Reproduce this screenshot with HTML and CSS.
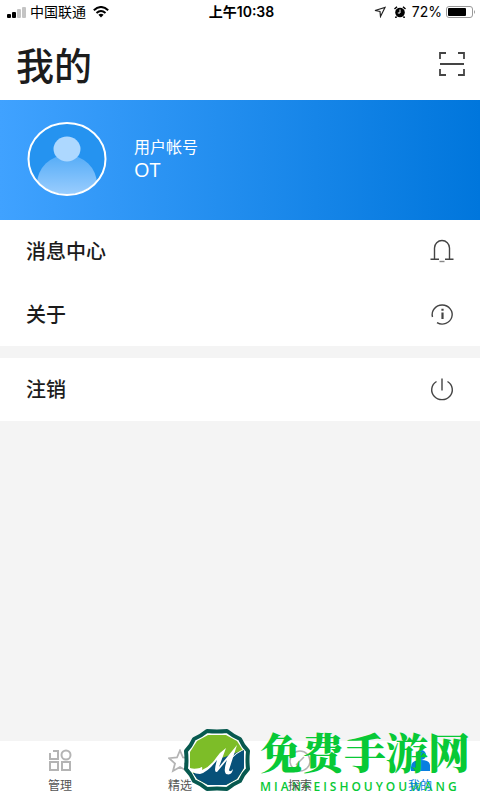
FILE: index.html
```html
<!DOCTYPE html>
<html lang="zh-CN">
<head>
<meta charset="utf-8">
<meta name="viewport" content="width=device-width, initial-scale=1">
<title>我的</title>
<link rel="stylesheet" href="styles.css">
</head>
<body>
<div class="status">
  <div class="status-side">
    <svg class="signal" width="20" height="12" viewBox="0 0 20 12"><rect x="0" y="8" width="4" height="4" rx="1"/><rect x="5" y="6" width="4" height="6" rx="1"/><rect x="10" y="3" width="4" height="9" rx="1" fill="#c4c4c4"/><rect x="15" y="1" width="4" height="11" rx="1" fill="#c4c4c4"/></svg>
    <span>中国联通</span>
    <svg class="wifi" width="16" height="12" viewBox="0 0 16 12" fill="none" stroke="#000" stroke-width="2"><path d="M.8 4.2Q8-2.2 15.2 4.2M3.5 7Q8 3 12.500 7"/><path d="M5.400 8.800Q8 6.800 10.600 8.800L8 11.500Z" fill="#000" stroke="none"/></svg>
  </div>
  <strong class="clock">上午10:38</strong>
  <div class="status-side status-right">
    <svg width="12" height="12" viewBox="0 0 12 12" fill="none" stroke="#222" stroke-width="1.200"><path d="M1 4.500 11 1.500 6.500 10.500 6 5.500Z"/></svg>
    <svg class="alarm" width="12" height="12" viewBox="0 0 12 12"><circle cx="6" cy="6.500" r="4.800"/><path d="M.5 3 3 .8M11.500 3 9 .8M2.500 10.500 1.500 12M9.500 10.500 10.500 12" stroke="#000" stroke-width="1.500"/><path d="M6 3.500V7H3.800" fill="none" stroke="#fff"/></svg>
    <span>72%</span>
    <svg class="battery" width="30" height="12" viewBox="0 0 30 12"><rect x=".5" y=".5" width="26" height="11" rx="2.500" fill="#fff" stroke="#999"/><rect x="2" y="2" width="18" height="8" rx="1"/><path d="M28 4q2 2 0 4z" fill="#999"/></svg>
  </div>
</div>
<header class="header">
  <h1>我的</h1>
  <button class="scan" aria-label="扫一扫"><svg width="26" height="24" viewBox="0 0 26 24" fill="none" stroke="#444" stroke-width="1.800"><path d="M1 7V1h6M19 1h6v6M1 17v6h6M19 23h6v-6M1 12h24"/></svg></button>
</header>
<main>
  <section class="profile">
    <svg class="avatar" width="80" height="76" viewBox="0 0 80 76">
      <defs><linearGradient id="body" x1="0" y1="0" x2="0" y2="1"><stop offset="0" stop-color="#55acf7"/><stop offset=".8" stop-color="#a6d3ff"/></linearGradient><clipPath id="ring"><ellipse cx="40" cy="38" rx="38" ry="35.500"/></clipPath></defs>
      <ellipse cx="40" cy="38" rx="38.500" ry="36" fill="#2593f0"/>
      <g clip-path="url(#ring)"><ellipse cx="40" cy="63" rx="30" ry="29" fill="url(#body)"/><ellipse cx="40" cy="28" rx="13.500" ry="12.500" fill="#add8ff"/></g>
      <ellipse cx="40" cy="38" rx="38.500" ry="36" fill="none" stroke="#fff" stroke-width="2"/>
    </svg>
    <div><div class="account">用户帐号</div><div class="name">OT</div></div>
  </section>
  <nav class="group" aria-label="消息与关于">
    <a class="row" href="#messages">消息中心<svg width="24" height="24" viewBox="0 0 24 24" fill="none" stroke="#444" stroke-width="1.400"><path d="M4.500 20V9a7.500 7.500 0 0 1 15 0v11M.5 20.300H9M15 20.300h8.500"/><path d="M9.500 22.500h5" stroke="#888"/></svg></a>
    <a class="row" href="#about">关于<svg width="24" height="24" viewBox="0 0 24 24" fill="none" stroke="#444" stroke-width="1.400"><path d="M2.500 15A10 9.500 0 1 1 7 20.700"/><path d="M12.500 10.500V17M12.500 6.800V8.800" stroke-width="2.200"/></svg></a>
  </nav>
  <div class="group">
    <button class="row">注销<svg width="24" height="24" viewBox="0 0 24 24" fill="none" stroke="#444" stroke-width="1.400"><path d="M6.500 4.500a10.300 9.800 0 1 0 11 0M12 1.500V13.500"/></svg></button>
  </div>
</main>
<footer class="footer">
  <nav class="tabs">
    <a href="#manage"><svg width="24" height="24" viewBox="0 0 24 24" fill="none" stroke="#b4b4b4" stroke-width="2"><path d="M2 4v6h8V2H5M2 13h8v8H2zM14 13h8v8h-8z"/><circle cx="18" cy="6" r="4.500"/></svg><span>管理</span></a>
    <a href="#featured"><svg width="24" height="24" viewBox="0 0 24 24" fill="none" stroke="#b4b4b4" stroke-width="1.800"><path d="m12 1.500 3 7 8 .7-6 5.300 2 7.500-7-4-7 4 2-7.500-6-5.300 8-.7z"/></svg><span>精选</span></a>
    <a href="#explore"><svg width="24" height="24" viewBox="0 0 24 24" fill="none" stroke="#b4b4b4" stroke-width="1.500"><circle cx="12" cy="12" r="10"/><path d="m8 16 8-8"/></svg><span>探索</span></a>
    <a class="active" href="#me"><svg width="24" height="24" viewBox="0 0 24 24" fill="#087fe0"><circle cx="13" cy="6" r="5"/><path d="M3 22v-4q0-7 10-7t9 7v4z"/></svg><span>我的</span></a>
  </nav>
  <div class="watermark">
    <svg width="68" height="66" viewBox="0 0 68 66">
      <path d="M24 3Q34 4 44 3 50 8 57 11 60 18 65 23 64 32 65 41 60 46 57 53 50 56 44 61 34 60 24 61 18 56 11 53 8 46 3 41 4 32 3 23 8 18 11 11 18 8 24 3Z" fill="#fff" stroke="#07594f" stroke-width="4" stroke-linejoin="round"/>
      <path d="M25 7H43L54 13 61 24V40L54 51 43 57H25L14 51 7 40V24L14 13Z" fill="#7dbd28"/>
      <path d="M61 22V40L54 51 43 57H25L14 51 10 45Q25 46 33 31L42 29 49 26Z" fill="#075179"/>
      <path d="M5 39Q9 42 17 40 20 37 19 42 28 38 33 30 37 24 43 20L36 39 54 17 46 42Q47 45 50 41 49 48 43 46 40 43 44 32L34 44Q30 45 34 32 25 44 17 46 8 46 5 39Z" fill="#fff"/>
      <path d="M48 31Q52 24 62 21 54 25 48 31Z" fill="#fff"/>
    </svg>
    <div class="brand"><div class="brand-name">免费手游网</div><div class="brand-latin">MIANFEISHOUYOUWANG</div></div>
  </div>
</footer>
</body>
</html>
```
FILE: styles.css
```css
* { box-sizing: border-box; }
body { margin: 0; min-height: 100vh; display: flex; flex-direction: column; background: #f4f4f4; color: #1c1c1c; font-family: "Open Sans", "Noto Sans CJK SC", sans-serif; }
svg { display: block; flex: none; }
button { border: 0; background: none; font: inherit; color: inherit; }
a { color: inherit; text-decoration: none; }
.status { display: grid; grid-template-columns: 1fr auto 1fr; align-items: center; height: 24px; padding: 0 4px 0 7px; background: #fff; color: #000; font: 14px/20px Inter, "Noto Sans CJK SC", sans-serif; }
.status-side { display: flex; align-items: center; gap: 3px; }
.status-right { justify-content: flex-end; gap: 4px; }
.wifi { margin-left: 4px; }
.alarm { margin: 0 2px 0 4px; }
.clock { font-weight: 600; }
.header { display: flex; align-items: center; justify-content: space-between; height: 76px; padding: 4px 15px 0 16px; background: #fff; }
.header h1 { margin: 0; font: 500 38px/56px "Noto Sans CJK SC", sans-serif; }
.scan { padding: 0; }
.profile { display: flex; align-items: center; gap: 27px; height: 120px; padding: 0 27px 2px; background: linear-gradient(90deg, #40a2ff, #0076dc); color: #fff; }
.account { font-size: 16px; line-height: 22px; }
.name { font-size: 20px; line-height: 24px; }
.group { background: #fff; margin-bottom: 12px; }
.row { display: flex; align-items: center; justify-content: space-between; width: 100%; height: 63px; padding: 0 26px 1px; font: 500 20px/28px "Noto Sans CJK SC", sans-serif; color: #1c1c1c; }
.footer { position: relative; margin-top: auto; background: #fff; }
.tabs { display: grid; grid-template-columns: repeat(4, 1fr); height: 59px; padding-top: 8px; color: #555; font: 12px/18px "Noto Sans CJK SC", sans-serif; }
.tabs a { display: flex; flex-direction: column; align-items: center; gap: 3px; }
.tabs .active { color: #087fe0; }
.tabs span { position: relative; z-index: 2; }
.watermark { position: absolute; z-index: 1; right: 10px; bottom: 5px; display: flex; align-items: center; gap: 9px; pointer-events: none; color: #08c936; }
.brand-name { font: 900 42px/48px "Noto Serif CJK SC", "Noto Sans CJK SC", serif; padding-bottom: 4px; }
.brand-latin { font: 600 12px/16px "Open Sans", sans-serif; letter-spacing: 3px; white-space: nowrap; }
```
